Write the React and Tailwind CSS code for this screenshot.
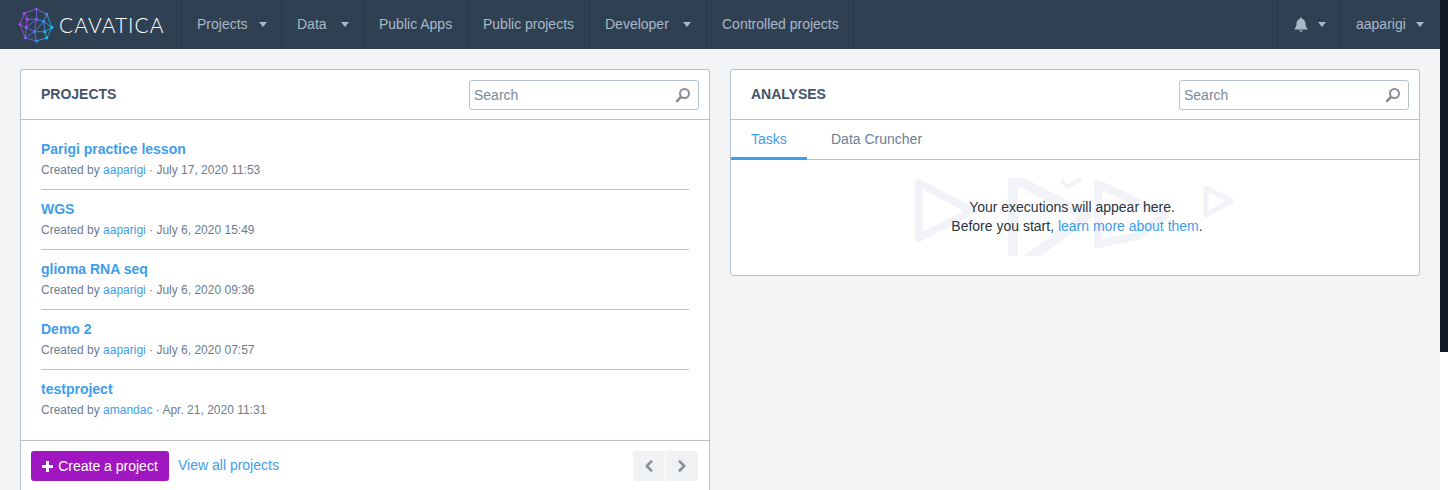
import React from 'react';
import { ChevronLeft, ChevronRight } from 'lucide-react';

const font = { fontFamily: '"Liberation Sans", Arial, sans-serif' };

const projects = [
  { name: 'Parigi practice lesson', by: 'aaparigi', date: 'July 17, 2020 11:53' },
  { name: 'WGS', by: 'aaparigi', date: 'July 6, 2020 15:49' },
  { name: 'glioma RNA seq', by: 'aaparigi', date: 'July 6, 2020 09:36' },
  { name: 'Demo 2', by: 'aaparigi', date: 'July 6, 2020 07:57' },
  { name: 'testproject', by: 'amandac', date: 'Apr. 21, 2020 11:31' },
];

const navItems = [
  { label: 'Projects', caret: true, w: 'w-[100px] gap-[11px]' },
  { label: 'Data', caret: true, w: 'w-[82px] gap-[14px]' },
  { label: 'Public Apps', w: 'w-[104px]' },
  { label: 'Public projects', w: 'w-[122px]' },
  { label: 'Developer', caret: true, w: 'w-[117px] gap-[14px]' },
  { label: 'Controlled projects', w: 'w-[147px]' },
];

function Caret() {
  return <span className="inline-block w-0 h-0 border-x-[4px] border-x-transparent border-t-[5px] border-t-[#a9b8c8]" />;
}

function Logo() {
  const pts = [[36, 8], [46, 13], [51, 26], [46, 36], [36, 39], [25, 36], [20, 23], [24, 12], [27, 18], [36, 18], [43, 20], [34, 30], [44, 30], [26, 26]];
  const links = [[0, 1], [1, 2], [2, 3], [3, 4], [4, 5], [5, 6], [6, 7], [7, 0], [7, 8], [8, 9], [9, 0], [9, 10], [10, 1], [10, 2], [10, 11], [11, 9], [11, 12], [12, 2], [12, 3], [11, 4], [11, 5], [11, 13], [13, 6], [13, 8], [13, 5], [9, 13], [10, 12]];
  const color = (x, y) => (x + y * 0.4 < 36 ? '#a845ec' : x + y * 0.4 < 46 ? '#7a62ea' : x + y * 0.4 < 56 ? '#3f8cec' : '#1fb6ee');
  return (
    <svg width="36" height="36" viewBox="18 6 35 35" className="block">
      {links.map(([a, b], i) => (
        <line key={i} x1={pts[a][0]} y1={pts[a][1]} x2={pts[b][0]} y2={pts[b][1]} stroke={color((pts[a][0] + pts[b][0]) / 2, (pts[a][1] + pts[b][1]) / 2)} strokeWidth="0.8" />
      ))}
      {pts.map(([x, y], i) => (
        <circle key={i} cx={x} cy={y} r="1.500" fill={color(x, y)} />
      ))}
    </svg>
  );
}

function Nav() {
  return (
    <nav className="flex h-[49px] bg-[#2f4052] text-[14px] text-[#a9b8c8] shrink-0">
      <div className="w-[182px] flex items-center pl-[18px] gap-[5px] border-r border-[#283747]">
        <Logo />
        <span className="text-[21px] font-light tracking-[1px] text-white" style={{ fontFamily: 'Lato, sans-serif' }}>CAVATICA</span>
      </div>
      {navItems.map((item) => (
        <div key={item.label} className={`${item.w} flex items-center pl-[15px] border-r border-[#283747]`}>
          <span>{item.label}</span>
          {item.caret && <Caret />}
        </div>
      ))}
      <div className="flex-1" />
      <div className="w-[63px] flex items-center pl-[16px] gap-[10px] border-l border-[#283747]">
        <svg width="14" height="15" viewBox="0 0 14 15" fill="#a9b8c8">
          <path d="M7 0.5c.6 0 1 .4 1 1v.5c2.2.4 3.5 2.2 3.5 4.5 0 3 .8 4 2 5.2V12.5H.5v-.8c1.200-1.200 2-2.200 2-5.200C2.500 4.200 3.800 2.400 6 2v-.5c0-.6.400-1 1-1zM5.300 13.300h3.400C8.600 14.200 7.900 14.800 7 14.800s-1.600-.6-1.700-1.500z" />
        </svg>
        <Caret />
      </div>
      <div className="w-[100px] flex items-center pl-[15px] gap-[10px] border-l border-[#283747]">
        <span>aaparigi</span>
        <Caret />
      </div>
    </nav>
  );
}

function SearchBox() {
  return (
    <div className="w-[230px] h-[30px] flex items-center justify-between border border-[#b5c3d1] rounded-[3px] pl-[4px] pr-[7px] bg-white">
      <span className="text-[14px] pt-[1px] text-[#7b8a99]">Search</span>
      <svg width="16" height="16" viewBox="0 0 16 16" fill="none" stroke="#8a8f94">
        <circle cx="9.500" cy="6.500" r="4.500" strokeWidth="2" />
        <path d="M6 10L2 14" strokeWidth="2.500" strokeLinecap="round" />
      </svg>
    </div>
  );
}

function PanelHeader({ title }) {
  return (
    <div className="h-[50px] flex items-center justify-between pl-[20px] pr-[10px] border-b border-[#b5c3d1]">
      <h2 className="text-[14px] font-bold text-[#43546a]">{title}</h2>
      <SearchBox />
    </div>
  );
}

function ProjectRow({ project, last }) {
  return (
    <div className={`h-[60px] pt-[9px] ${last ? '' : 'border-b border-[#b5c3d1]'}`}>
      <div className="text-[14px] leading-[20px] font-bold text-[#3e9ded]">{project.name}</div>
      <div className="text-[12px] leading-[16px] mt-[3px] text-[#6b7d92]">
        Created by <span className="text-[#3e9ded]">{project.by}</span> · {project.date}
      </div>
    </div>
  );
}

function ProjectsPanel() {
  return (
    <section className="w-[690px] h-[441px] shrink-0 bg-white border border-[#b5c3d1] rounded-[3px] rounded-b-none border-b-0 flex flex-col">
      <PanelHeader title="PROJECTS" />
      <div className="h-[321px] px-[20px] pt-[10px] border-b border-[#b5c3d1]">
        {projects.map((p, i) => (
          <ProjectRow key={p.name} project={p} last={i === projects.length - 1} />
        ))}
      </div>
      <div className="flex items-center pl-[10px] pr-[11px] pt-[10px]">
        <button className="w-[138px] h-[30px] rounded-[3px] bg-[#a017c2] text-white text-[14px] flex items-center justify-center gap-[5px]">
          <svg width="11" height="11" viewBox="0 0 11 11" fill="#fff"><path d="M4 0h3v4h4v3H7v4H4V7H0V4h4z" /></svg>
          Create a project
        </button>
        <span className="ml-[9px] mb-[2px] text-[14px] text-[#3e9ded]">View all projects</span>
        <div className="ml-auto flex gap-[1px]">
          <div className="w-[32px] h-[30px] rounded-l-[3px] bg-[#f1f2f4] flex items-center justify-center">
            <ChevronLeft size={18} strokeWidth={3.500} className="text-[#8a9199]" />
          </div>
          <div className="w-[32px] h-[30px] rounded-r-[3px] bg-[#f1f2f4] flex items-center justify-center">
            <ChevronRight size={18} strokeWidth={3.500} className="text-[#8a9199]" />
          </div>
        </div>
      </div>
    </section>
  );
}

function PlayMarks() {
  return (
    <svg width="325" height="78" viewBox="0 0 325 78" fill="none" stroke="#f2f3f8" strokeLinejoin="round" className="absolute left-[184px] top-[18px]">
      <path d="M4 5L57 33L4 60Z" strokeWidth="8" />
      <path d="M98 0L172 38L98 92Z" strokeWidth="10" />
      <path d="M147 2L152 9L166 1" strokeWidth="4" />
      <path d="M183 6L250 37L222 58L183 66Z" strokeWidth="8" />
      <path d="M291 10L316 23L291 37Z" strokeWidth="5" />
    </svg>
  );
}

function AnalysesPanel() {
  return (
    <section className="w-[690px] h-[207px] shrink-0 bg-white border border-[#b5c3d1] rounded-[3px] flex flex-col">
      <PanelHeader title="ANALYSES" />
      <div className="h-[40px] flex border-b border-[#b5c3d1] text-[14px]">
        <div className="w-[76px] h-[40px] pl-[20px] pt-[9px] text-[#3e9ded] border-b-[3px] border-[#3e9ded]">Tasks</div>
        <div className="pl-[24px] pt-[9px] text-[#6b7f95]">Data Cruncher</div>
      </div>
      <div className="relative flex-1 overflow-hidden">
        <PlayMarks />
        <div className="relative pt-[38px] text-center text-[14px] leading-[19px] text-[#2b3440]">
          <div className="pr-[6px]">Your executions will appear here.</div>
          <div className="pl-[4px]">Before you start, <span className="text-[#3e9ded]">learn more about them</span>.</div>
        </div>
      </div>
    </section>
  );
}

export default function App() {
  return (
    <div className="flex w-[1448px] h-[490px] overflow-hidden bg-white" style={font}>
      <div className="w-[1440px] h-[490px] flex flex-col bg-[#f3f4f6]">
        <Nav />
        <main className="flex items-start gap-[20px] pl-[20px] pt-[20px]">
          <ProjectsPanel />
          <AnalysesPanel />
        </main>
      </div>
      <div className="w-[8px] h-[352px] bg-[#101828]" />
    </div>
  );
}
